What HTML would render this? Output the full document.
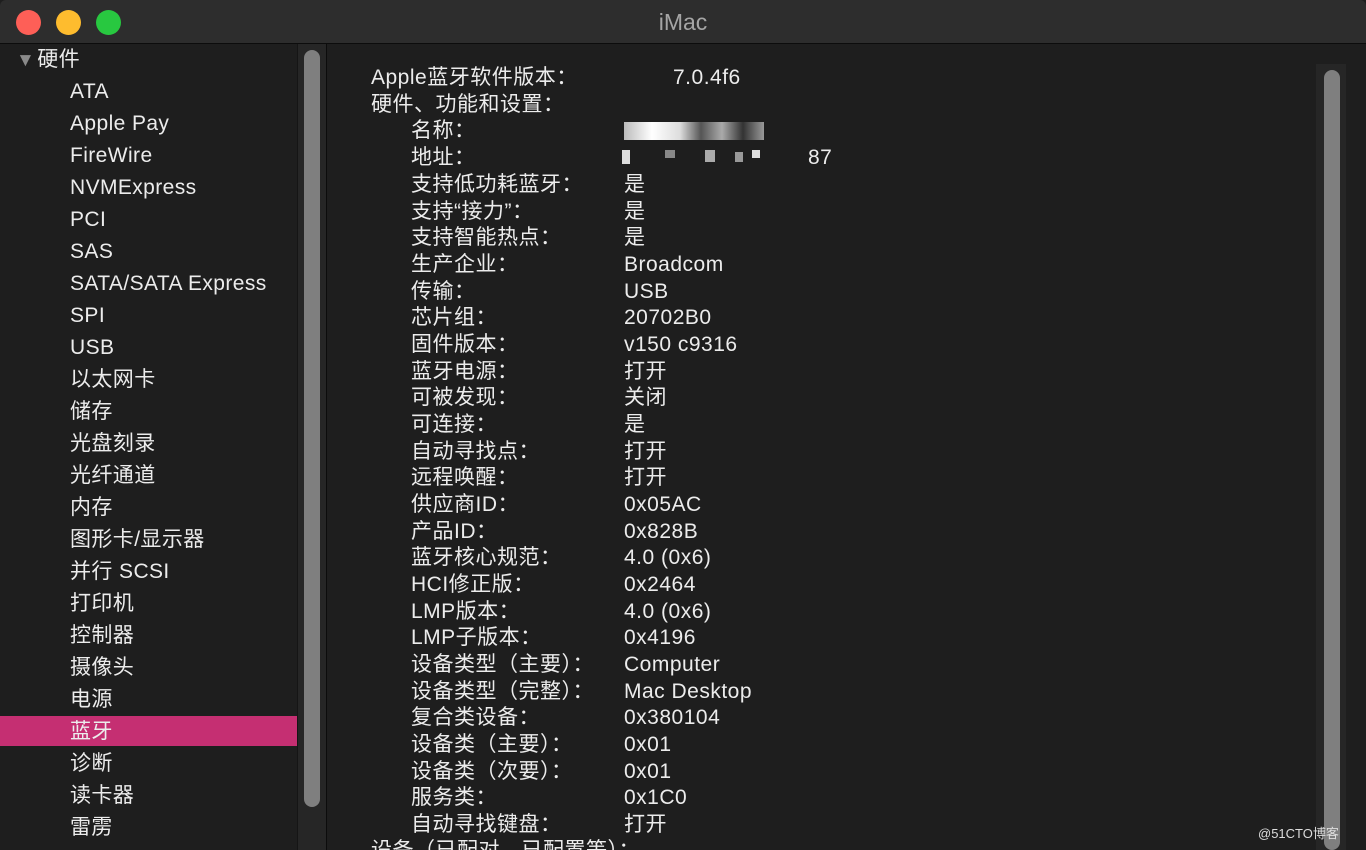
<!DOCTYPE html>
<html style="width:1366px;height:850px;overflow:hidden"><head><meta charset="utf-8"><style>
*{margin:0;padding:0;box-sizing:border-box}
body{width:1366px;height:850px;overflow:hidden;background:#1e1e1e;font-family:"Liberation Sans","Noto Sans CJK SC",sans-serif;color:#e6e6e6;position:relative}
.title{position:absolute;left:0;top:0;width:1366px;height:44px;background:#2d2d2d;border-bottom:1px solid #0c0c0c;border-radius:6px 6px 0 0}
.title .t{position:absolute;left:0;right:0;top:9px;text-align:center;font-size:23px;color:#a5a5a5}
.dot{position:absolute;top:10px;width:25px;height:25px;border-radius:50%}
.side{position:absolute;left:0;top:44px;width:297px;height:806px;background:#1e1e1e}
.strack{position:absolute;left:297px;top:44px;width:30px;height:806px;background:#262626;border-left:1px solid #151515;border-right:1px solid #0c0c0c}
.thumb{position:absolute;width:16px;background:#7f7f7f;border-radius:8px}
.si{position:absolute;left:70px;font-size:21px;letter-spacing:.4px;line-height:30px;color:#ececec;white-space:nowrap}
.sel{position:absolute;left:0;top:716px;width:297px;height:30px;background:#c52f72}
.main{position:absolute;left:328px;top:44px;width:1038px;height:806px;background:#1e1e1e}
.rtrack{position:absolute;left:1316px;top:64px;width:30px;height:786px;background:#262626}
.r{position:absolute;font-size:21px;letter-spacing:.5px;line-height:26px;white-space:nowrap;color:#ececec}
.b{position:absolute;background:#ddd}
</style></head><body>
<div class="title">
<div class="dot" style="left:16px;background:#fe5f57"></div>
<div class="dot" style="left:56px;background:#febc2e"></div>
<div class="dot" style="left:96px;background:#28c840"></div>
<div class="t">iMac</div>
</div>
<div class="side"></div>
<div class="sel"></div>
<div class="si" style="left:16px;top:45px"><span style="color:#8a8a8a;font-size:19px;margin-right:2px">▼</span>硬件</div>
<div class="si" style="top:77px">ATA</div>
<div class="si" style="top:109px">Apple Pay</div>
<div class="si" style="top:141px">FireWire</div>
<div class="si" style="top:173px">NVMExpress</div>
<div class="si" style="top:205px">PCI</div>
<div class="si" style="top:237px">SAS</div>
<div class="si" style="top:269px">SATA/SATA Express</div>
<div class="si" style="top:301px">SPI</div>
<div class="si" style="top:333px">USB</div>
<div class="si" style="top:365px">以太网卡</div>
<div class="si" style="top:397px">储存</div>
<div class="si" style="top:429px">光盘刻录</div>
<div class="si" style="top:461px">光纤通道</div>
<div class="si" style="top:493px">内存</div>
<div class="si" style="top:525px">图形卡/显示器</div>
<div class="si" style="top:557px">并行 SCSI</div>
<div class="si" style="top:589px">打印机</div>
<div class="si" style="top:621px">控制器</div>
<div class="si" style="top:653px">摄像头</div>
<div class="si" style="top:685px">电源</div>
<div class="si" style="top:717px">蓝牙</div>
<div class="si" style="top:749px">诊断</div>
<div class="si" style="top:781px">读卡器</div>
<div class="si" style="top:813px">雷雳</div>
<div class="strack"><div class="thumb" style="left:6px;top:6px;height:757px"></div></div>
<div class="main"></div>
<div class="rtrack"><div class="thumb" style="left:8px;top:6px;height:780px"></div></div>
<div class="r" style="left:371px;top:65px">Apple蓝牙软件版本：</div>
<div class="r" style="left:673px;top:65px">7.0.4f6</div>
<div class="r" style="left:371px;top:92px">硬件、功能和设置：</div>
<div class="r" style="left:411px;top:118px">名称：</div>
<div class="b" style="left:624px;top:122px;width:140px;height:18px;background:linear-gradient(90deg,#bbb,#fff 20%,#ddd 40%,#555 55%,#aaa 70%,#333 85%,#999)"></div>
<div class="r" style="left:411px;top:145px">地址：</div>
<div class="b" style="left:622px;top:150px;width:8px;height:14px"></div>
<div class="b" style="left:665px;top:150px;width:10px;height:8px;background:#888"></div>
<div class="b" style="left:705px;top:150px;width:10px;height:12px;background:#aaa"></div>
<div class="b" style="left:735px;top:152px;width:8px;height:10px;background:#999"></div>
<div class="b" style="left:752px;top:150px;width:8px;height:8px"></div>
<div class="r" style="left:808px;top:145px">87</div>
<div class="r" style="left:411px;top:172px">支持低功耗蓝牙：</div><div class="r" style="left:624px;top:172px">是</div>
<div class="r" style="left:411px;top:199px">支持“接力”：</div><div class="r" style="left:624px;top:199px">是</div>
<div class="r" style="left:411px;top:225px">支持智能热点：</div><div class="r" style="left:624px;top:225px">是</div>
<div class="r" style="left:411px;top:252px">生产企业：</div><div class="r" style="left:624px;top:252px">Broadcom</div>
<div class="r" style="left:411px;top:279px">传输：</div><div class="r" style="left:624px;top:279px">USB</div>
<div class="r" style="left:411px;top:305px">芯片组：</div><div class="r" style="left:624px;top:305px">20702B0</div>
<div class="r" style="left:411px;top:332px">固件版本：</div><div class="r" style="left:624px;top:332px">v150 c9316</div>
<div class="r" style="left:411px;top:359px">蓝牙电源：</div><div class="r" style="left:624px;top:359px">打开</div>
<div class="r" style="left:411px;top:385px">可被发现：</div><div class="r" style="left:624px;top:385px">关闭</div>
<div class="r" style="left:411px;top:412px">可连接：</div><div class="r" style="left:624px;top:412px">是</div>
<div class="r" style="left:411px;top:439px">自动寻找点：</div><div class="r" style="left:624px;top:439px">打开</div>
<div class="r" style="left:411px;top:465px">远程唤醒：</div><div class="r" style="left:624px;top:465px">打开</div>
<div class="r" style="left:411px;top:492px">供应商ID：</div><div class="r" style="left:624px;top:492px">0x05AC</div>
<div class="r" style="left:411px;top:519px">产品ID：</div><div class="r" style="left:624px;top:519px">0x828B</div>
<div class="r" style="left:411px;top:545px">蓝牙核心规范：</div><div class="r" style="left:624px;top:545px">4.0 (0x6)</div>
<div class="r" style="left:411px;top:572px">HCI修正版：</div><div class="r" style="left:624px;top:572px">0x2464</div>
<div class="r" style="left:411px;top:599px">LMP版本：</div><div class="r" style="left:624px;top:599px">4.0 (0x6)</div>
<div class="r" style="left:411px;top:625px">LMP子版本：</div><div class="r" style="left:624px;top:625px">0x4196</div>
<div class="r" style="left:411px;top:652px">设备类型（主要）：</div><div class="r" style="left:624px;top:652px">Computer</div>
<div class="r" style="left:411px;top:679px">设备类型（完整）：</div><div class="r" style="left:624px;top:679px">Mac Desktop</div>
<div class="r" style="left:411px;top:705px">复合类设备：</div><div class="r" style="left:624px;top:705px">0x380104</div>
<div class="r" style="left:411px;top:732px">设备类（主要）：</div><div class="r" style="left:624px;top:732px">0x01</div>
<div class="r" style="left:411px;top:759px">设备类（次要）：</div><div class="r" style="left:624px;top:759px">0x01</div>
<div class="r" style="left:411px;top:785px">服务类：</div><div class="r" style="left:624px;top:785px">0x1C0</div>
<div class="r" style="left:411px;top:812px">自动寻找键盘：</div><div class="r" style="left:624px;top:812px">打开</div>
<div class="r" style="left:371px;top:838px">设备（已配对、已配置等）：</div>
<div style="position:absolute;left:1258px;top:823px;font-size:13px;color:#ddd">@51CTO博客</div>
</body></html>
